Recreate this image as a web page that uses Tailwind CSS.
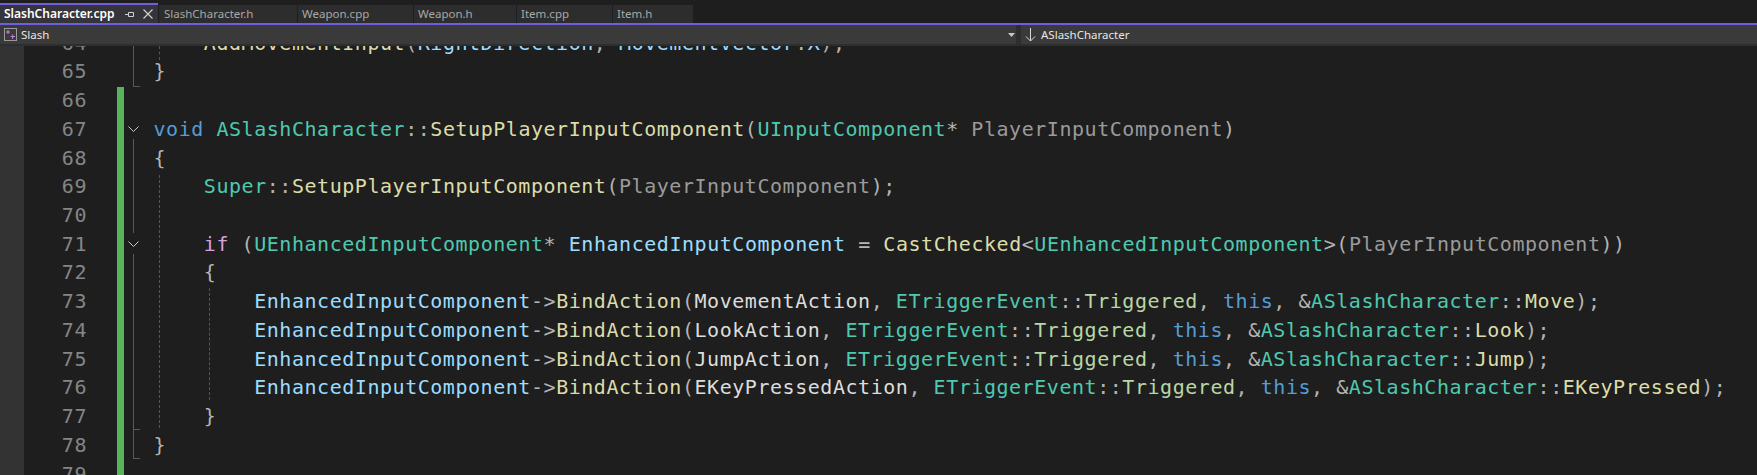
<!DOCTYPE html>
<html lang="en">
  <head>
    <meta charset="UTF-8" />
    <title>SlashCharacter.cpp</title>
    <script src="https://cdn.jsdelivr.net/npm/@tailwindcss/browser@4"></script>
  </head>
  <body class="bg-[#1e1e1e] overflow-hidden font-['Noto_Sans',sans-serif]">
    <div class="w-[1757px] h-[475px] flex flex-col overflow-hidden">
      <!-- Tabs -->
      <div class="h-[23px] pt-[3px] flex gap-[1px] text-[11.5px] leading-[18px] text-[#a8a8a8] shrink-0">
        <div class="w-[158px] border-t-2 border-[#6f5fdc] bg-[#34343a] pl-[4px] flex items-center text-[12px] text-white font-semibold">
          SlashCharacter.cpp
          <svg class="ml-[11px] w-[9px] h-[9px]" viewBox="0 0 9 9" fill="none" stroke="#d0d0d0"><path d="M0 4.5h3M3.5 2.5v4M3.5 2.5h5v4h-5" /></svg>
          <svg class="ml-[9px] w-[10px] h-[10px]" viewBox="0 0 10 10" fill="none" stroke="#d0d0d0" stroke-width="1.2"><path d="M0.5 0.5l9 9M9.5 0.5l-9 9" /></svg>
        </div>
        <div class="w-[138px] mt-[2px] bg-[#2d2d2d] pl-[5px]">SlashCharacter.h</div>
        <div class="w-[115px] mt-[2px] bg-[#2d2d2d] pl-[4px]">Weapon.cpp</div>
        <div class="w-[102px] mt-[2px] bg-[#2d2d2d] pl-[4px]">Weapon.h</div>
        <div class="w-[95px] mt-[2px] bg-[#2d2d2d] pl-[4px]">Item.cpp</div>
        <div class="w-[80px] mt-[2px] bg-[#2d2d2d] pl-[4px]">Item.h</div>
      </div>
      <div class="h-[2px] bg-[#6f5fdc] shrink-0"></div>

      <!-- Navigation bar -->
      <div class="h-[21px] bg-[#2e2e2e] flex text-[11.5px] leading-[19px] text-[#e6e6e6] shrink-0 relative z-10">
        <div class="w-[1016px] h-[19px] bg-[#3a3a3a] flex items-center pl-[4px]">
          <svg class="w-[13px] h-[13px]" viewBox="0 0 13 13" fill="none">
            <rect x="0.5" y="0.5" width="12" height="12" stroke="#9a9a9a" />
            <path d="M2 4h4M4 2v4M6.5 8.5h4.5M8.7 6.5v4.5" stroke="#c586e0" />
          </svg>
          <span class="ml-[4px]">Slash</span>
          <svg class="ml-auto mr-[1px] w-[7px] h-[4px]" viewBox="0 0 7 4"><path d="M0 0h7L3.5 4z" fill="#c8c8c8" /></svg>
        </div>
        <div class="ml-[5px] flex-1 h-[19px] bg-[#3a3a3a] flex items-center pl-[4px]">
          <svg class="w-[11px] h-[15px]" viewBox="0 0 11 15" fill="none" stroke="#d8d8d8"><path d="M5.5 1v13M1 9.5l4.5 4.5L10 9.5" /></svg>
          <span class="ml-[5px]">ASlashCharacter</span>
        </div>
      </div>

      <!-- Editor -->
      <div class="flex-1 flex relative overflow-hidden">
        <div class="w-[24px] bg-[#333333] shrink-0"></div>
        <div class="w-[63px] shrink-0 -mt-[17.4px] text-right text-[#858585] font-['DejaVu_Sans_Mono',monospace] text-[20px] tracking-[0.54px] leading-[28.73px]">
          <div>64</div><div>65</div><div>66</div><div>67</div><div>68</div><div>69</div><div>70</div><div>71</div>
          <div>72</div><div>73</div><div>74</div><div>75</div><div>76</div><div>77</div><div>78</div><div>79</div>
        </div>

        <!-- Change margin -->
        <div class="absolute left-[117px] top-[41px] bottom-0 w-[7px] bg-[#57b45a]"></div>

        <!-- Fold guides -->
        <div class="absolute left-[133px] top-0 h-[41px] w-[7px] border-l border-b border-[#5a5a5a]"></div>
        <div class="absolute left-[133px] top-[93px] h-[94px] border-l border-[#5a5a5a]"></div>
        <div class="absolute left-[133px] top-[208px] h-[176px] w-[7px] border-l border-b border-[#5a5a5a]"></div>
        <div class="absolute left-[133px] top-[384px] h-[29px] w-[7px] border-l border-b border-[#5a5a5a]"></div>
        <svg class="absolute left-[128px] top-[80px] w-[11px] h-[7px]" viewBox="0 0 11 7" fill="none" stroke="#c8c8c8"><path d="M0.5 0.5l5 5 5-5" /></svg>
        <svg class="absolute left-[128px] top-[195px] w-[11px] h-[7px]" viewBox="0 0 11 7" fill="none" stroke="#c8c8c8"><path d="M0.5 0.5l5 5 5-5" /></svg>

        <!-- Indent guides -->
        <div class="absolute left-[159px] top-0 h-[14px] border-l border-dashed border-[#555555]"></div>
        <div class="absolute left-[159px] top-[129px] h-[253px] border-l border-dashed border-[#555555]"></div>
        <div class="absolute left-[209px] top-[242px] h-[112px] border-l border-dashed border-[#555555]"></div>

        <!-- Code -->
        <div class="absolute left-[153.5px] -top-[17.4px] [&>div]:whitespace-pre font-['DejaVu_Sans_Mono',monospace] text-[20px] tracking-[0.54px] leading-[28.73px] text-[#dcdcdc]">
          <div>    <span class="text-[#dcdcaa]">AddMovementInput</span><span class="text-[#b4b4b4]">(</span><span class="text-[#9cdcfe]">RightDirection</span><span class="text-[#b4b4b4]">,</span> <span class="text-[#9cdcfe]">MovementVector</span><span class="text-[#b4b4b4]">.</span><span class="text-[#9cdcfe]">X</span><span class="text-[#b4b4b4]">);</span></div>
          <div class="text-[#b4b4b4]">}</div>
          <div> </div>
          <div><span class="text-[#569cd6]">void</span> <span class="text-[#4ec9b0]">ASlashCharacter</span><span class="text-[#b4b4b4]">::</span><span class="text-[#dcdcaa]">SetupPlayerInputComponent</span><span class="text-[#b4b4b4]">(</span><span class="text-[#4ec9b0]">UInputComponent</span><span class="text-[#b4b4b4]">*</span> <span class="text-[#9a9a9a]">PlayerInputComponent</span><span class="text-[#b4b4b4]">)</span></div>
          <div class="text-[#b4b4b4]">{</div>
          <div>    <span class="text-[#4ec9b0]">Super</span><span class="text-[#b4b4b4]">::</span><span class="text-[#dcdcaa]">SetupPlayerInputComponent</span><span class="text-[#b4b4b4]">(</span><span class="text-[#9a9a9a]">PlayerInputComponent</span><span class="text-[#b4b4b4]">);</span></div>
          <div> </div>
          <div>    <span class="text-[#d8a0df]">if</span> <span class="text-[#b4b4b4]">(</span><span class="text-[#4ec9b0]">UEnhancedInputComponent</span><span class="text-[#b4b4b4]">*</span> <span class="text-[#9cdcfe]">EnhancedInputComponent</span> <span class="text-[#b4b4b4]">=</span> <span class="text-[#dcdcaa]">CastChecked</span><span class="text-[#b4b4b4]">&lt;</span><span class="text-[#4ec9b0]">UEnhancedInputComponent</span><span class="text-[#b4b4b4]">&gt;(</span><span class="text-[#9a9a9a]">PlayerInputComponent</span><span class="text-[#b4b4b4]">))</span></div>
          <div class="text-[#b4b4b4]">    {</div>
          <div>        <span class="text-[#9cdcfe]">EnhancedInputComponent</span><span class="text-[#b4b4b4]">-&gt;</span><span class="text-[#dcdcaa]">BindAction</span><span class="text-[#b4b4b4]">(</span>MovementAction<span class="text-[#b4b4b4]">,</span> <span class="text-[#4ec9b0]">ETriggerEvent</span><span class="text-[#b4b4b4]">::</span><span class="text-[#b8d7a3]">Triggered</span><span class="text-[#b4b4b4]">,</span> <span class="text-[#569cd6]">this</span><span class="text-[#b4b4b4]">, &amp;</span><span class="text-[#4ec9b0]">ASlashCharacter</span><span class="text-[#b4b4b4]">::</span><span class="text-[#dcdcaa]">Move</span><span class="text-[#b4b4b4]">);</span></div>
          <div>        <span class="text-[#9cdcfe]">EnhancedInputComponent</span><span class="text-[#b4b4b4]">-&gt;</span><span class="text-[#dcdcaa]">BindAction</span><span class="text-[#b4b4b4]">(</span>LookAction<span class="text-[#b4b4b4]">,</span> <span class="text-[#4ec9b0]">ETriggerEvent</span><span class="text-[#b4b4b4]">::</span><span class="text-[#b8d7a3]">Triggered</span><span class="text-[#b4b4b4]">,</span> <span class="text-[#569cd6]">this</span><span class="text-[#b4b4b4]">, &amp;</span><span class="text-[#4ec9b0]">ASlashCharacter</span><span class="text-[#b4b4b4]">::</span><span class="text-[#dcdcaa]">Look</span><span class="text-[#b4b4b4]">);</span></div>
          <div>        <span class="text-[#9cdcfe]">EnhancedInputComponent</span><span class="text-[#b4b4b4]">-&gt;</span><span class="text-[#dcdcaa]">BindAction</span><span class="text-[#b4b4b4]">(</span>JumpAction<span class="text-[#b4b4b4]">,</span> <span class="text-[#4ec9b0]">ETriggerEvent</span><span class="text-[#b4b4b4]">::</span><span class="text-[#b8d7a3]">Triggered</span><span class="text-[#b4b4b4]">,</span> <span class="text-[#569cd6]">this</span><span class="text-[#b4b4b4]">, &amp;</span><span class="text-[#4ec9b0]">ASlashCharacter</span><span class="text-[#b4b4b4]">::</span><span class="text-[#dcdcaa]">Jump</span><span class="text-[#b4b4b4]">);</span></div>
          <div>        <span class="text-[#9cdcfe]">EnhancedInputComponent</span><span class="text-[#b4b4b4]">-&gt;</span><span class="text-[#dcdcaa]">BindAction</span><span class="text-[#b4b4b4]">(</span>EKeyPressedAction<span class="text-[#b4b4b4]">,</span> <span class="text-[#4ec9b0]">ETriggerEvent</span><span class="text-[#b4b4b4]">::</span><span class="text-[#b8d7a3]">Triggered</span><span class="text-[#b4b4b4]">,</span> <span class="text-[#569cd6]">this</span><span class="text-[#b4b4b4]">, &amp;</span><span class="text-[#4ec9b0]">ASlashCharacter</span><span class="text-[#b4b4b4]">::</span><span class="text-[#dcdcaa]">EKeyPressed</span><span class="text-[#b4b4b4]">);</span></div>
          <div class="text-[#b4b4b4]">    }</div>
          <div class="text-[#b4b4b4]">}</div>
        </div>
      </div>
    </div>
  </body>
</html>
